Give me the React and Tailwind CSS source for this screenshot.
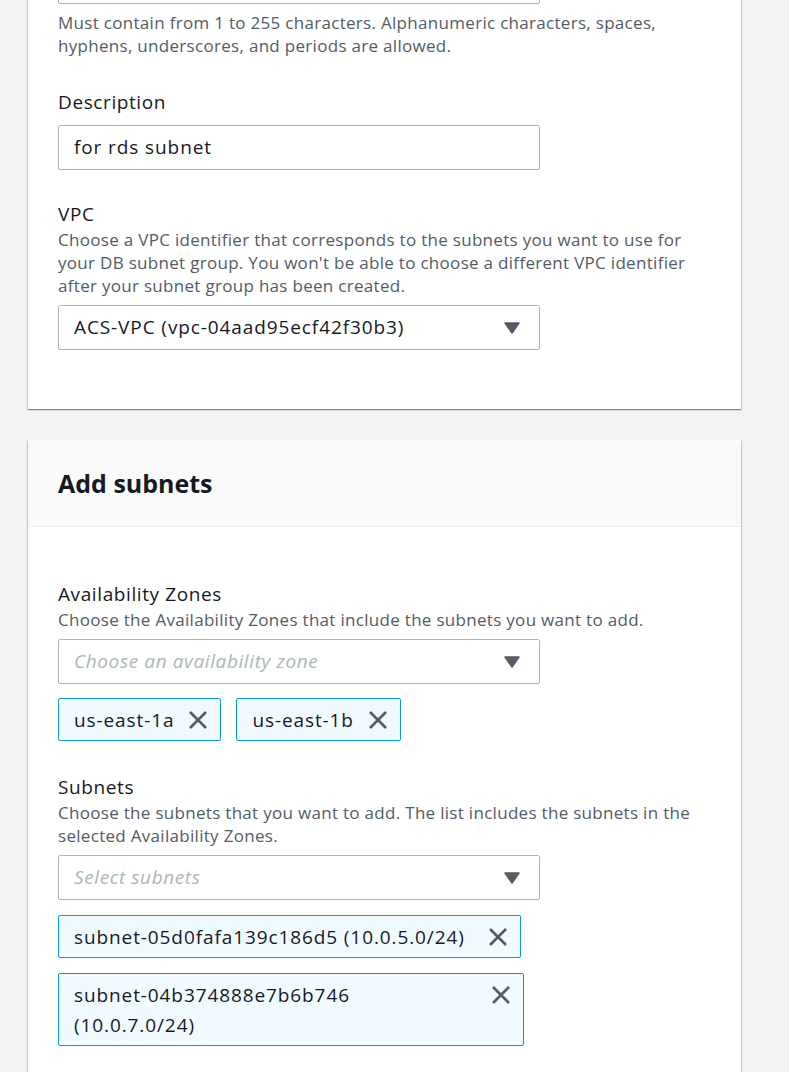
import React from "react";

const font = { fontFamily: '"Open Sans", "Noto Sans", sans-serif' };

function Caret() {
  return (
    <svg width="16" height="12" viewBox="0 0 16 12" className="shrink-0">
      <path d="M1 1 H15 L8 11 Z" fill="#545b64" stroke="#545b64" strokeWidth="1.5" strokeLinejoin="round" />
    </svg>
  );
}

function XIcon() {
  return (
    <svg width="20" height="20" viewBox="0 0 20 20" className="shrink-0">
      <path d="M2 2 L18 18 M18 2 L2 18" stroke="#545b64" strokeWidth="2.6" strokeLinecap="butt" fill="none" />
    </svg>
  );
}

function Select({ value, placeholder }) {
  return (
    <div className="flex h-[45px] w-[482px] items-center justify-between rounded-[2px] border border-[#aab7b8] bg-white pl-[15px] pr-[19px]">
      {value ? (
        <span className="text-[19px] tracking-[0.9px] text-[#16191f]">{value}</span>
      ) : (
        <span className="text-[19px] tracking-[0.6px] italic text-[#aab7b8]">{placeholder}</span>
      )}
      <Caret />
    </div>
  );
}

function Token({ children, className = "" }) {
  return (
    <div className={"flex items-start justify-between gap-[14px] rounded-[2px] border border-[#00a1c9] bg-[#f1faff] pl-[15px] pr-[12px] pt-[6px] pb-[5px] " + className}>
      <span className="text-[19px] leading-[30px] tracking-[0.9px] text-[#16191f]">{children}</span>
      <span className="mt-[5px]"><XIcon /></span>
    </div>
  );
}

function Label({ children }) {
  return <div className="text-[19px] leading-[24px] tracking-[0.6px] text-[#16191f]">{children}</div>;
}

function Help({ children, className = "" }) {
  return <div className={"text-[17px] leading-[23px] tracking-[0.3px] text-[#545b64] " + className}>{children}</div>;
}

const cardShadow =
  "shadow-[0_1px_1px_0_rgba(0,28,36,0.3),1px_1px_1px_0_rgba(0,28,36,0.15),-1px_1px_1px_0_rgba(0,28,36,0.15)]";

export default function App() {
  return (
    <div className="min-h-[1072px] overflow-hidden bg-[#f2f3f3] pl-[28px] pr-[48px]" style={font}>
      <div className={"mt-[-41px] w-[713px] bg-white px-[30px] pb-[59px] " + cardShadow}>
        <div className="h-[45px] w-[482px] rounded-[2px] border border-[#aab7b8]" />
        <Help className="mt-[7px] w-[640px]">
          Must contain from 1 to 255 characters. Alphanumeric characters, spaces, hyphens, underscores, and periods are allowed.
        </Help>
        <div className="mt-[33px]">
          <Label>Description</Label>
        </div>
        <div className="mt-[11px] flex h-[45px] w-[482px] items-center rounded-[2px] border border-[#aab7b8] bg-white pl-[15px]">
          <span className="text-[19px] tracking-[0.9px] text-[#16191f]">for rds subnet</span>
        </div>
        <div className="mt-[32px]">
          <Label>VPC</Label>
        </div>
        <Help className="mt-[2px] w-[640px]">
          Choose a VPC identifier that corresponds to the subnets you want to use for your DB subnet group. You won't be able to choose a different VPC identifier after your subnet group has been created.
        </Help>
        <div className="mt-[8px]">
          <Select value="ACS-VPC (vpc-04aad95ecf42f30b3)" />
        </div>
      </div>

      <div className={"mt-[31px] w-[713px] bg-white " + cardShadow}>
        <div className="flex h-[87px] items-center border-b border-[#eaeded] bg-[#fafafa] px-[30px]">
          <h2 className="text-[25px] font-bold leading-[30px] text-[#16191f]">Add subnets</h2>
        </div>
        <div className="px-[30px] pt-[55px] pb-[40px]">
          <Label>Availability Zones</Label>
          <Help className="mt-[2px]">Choose the Availability Zones that include the subnets you want to add.</Help>
          <div className="mt-[8px]">
            <Select placeholder="Choose an availability zone" />
          </div>
          <div className="mt-[14px] flex gap-[15px] whitespace-nowrap">
            <Token>us-east-1a</Token>
            <Token>us-east-1b</Token>
          </div>
          <div className="mt-[34px]">
            <Label>Subnets</Label>
          </div>
          <Help className="mt-[2px] w-[640px]">
            Choose the subnets that you want to add. The list includes the subnets in the selected Availability Zones.
          </Help>
          <div className="mt-[8px]">
            <Select placeholder="Select subnets" />
          </div>
          <div className="mt-[15px] flex flex-col items-start gap-[15px]">
            <Token className="w-[463px]">subnet-05d0fafa139c186d5 (10.0.5.0/24)</Token>
            <Token className="w-[466px]">
              subnet-04b374888e7b6b746
              <br />
              (10.0.7.0/24)
            </Token>
          </div>
        </div>
      </div>
    </div>
  );
}
